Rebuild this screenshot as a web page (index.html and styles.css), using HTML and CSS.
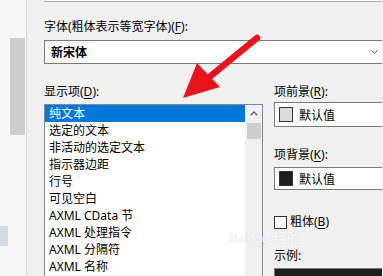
FILE: index.html
```html
<!DOCTYPE html>
<html lang="zh-CN">
<head>
    <meta charset="UTF-8">
    <title>字体和颜色</title>
    <link rel="stylesheet" href="styles.css">
</head>
<body>
    <div class="window">
        <!-- left pane, only an edge of it shows -->
        <div class="side">
            <div class="side-thumb"></div>
            <div class="side-tab"></div>
        </div>

        <div class="dialog">
            <div class="top-edge"></div>
            <div class="label font-label">字体(粗体表示等宽字体)(<u>F</u>):</div>
            <div class="combo font-combo">
                <span class="font-name">新宋体</span>
                <svg class="drop" width="7" height="4" viewBox="0 0 7 4"><path d="M0.5 0.5 L3.5 3.2 L6.5 0.5" fill="none" stroke="#555" stroke-width="1"/></svg>
            </div>

            <div class="columns">
                <!-- display items list -->
                <div class="items-col">
                    <div class="label">显示项(<u>D</u>):</div>
                    <div class="listbox">
                        <ul class="items">
                            <li class="selected">纯文本</li>
                            <li>选定的文本</li>
                            <li>非活动的选定文本</li>
                            <li>指示器边距</li>
                            <li>行号</li>
                            <li>可见空白</li>
                            <li>AXML CData 节</li>
                            <li>AXML 处理指令</li>
                            <li>AXML 分隔符</li>
                            <li>AXML 名称</li>
                        </ul>
                        <div class="vscroll">
                            <div class="scroll-up">
                                <svg width="8" height="5" viewBox="0 0 8 5"><path d="M0.7 4.3 L4 1 L7.3 4.3" fill="none" stroke="#606060" stroke-width="1.3"/></svg>
                            </div>
                            <div class="scroll-thumb"></div>
                        </div>
                    </div>
                </div>

                <!-- item colours -->
                <div class="props-col">
                    <div class="label">项前景(<u>R</u>):</div>
                    <div class="combo color-combo fore">
                        <span class="swatch light"></span>默认值
                    </div>
                    <div class="label back-label">项背景(<u>K</u>):</div>
                    <div class="combo color-combo back">
                        <span class="swatch dark"></span>默认值
                    </div>
                    <div class="check">
                        <span class="check-box"></span>粗体(<u>B</u>)
                    </div>
                    <div class="label sample-label">示例:</div>
                    <div class="sample"></div>
                </div>
            </div>
        </div>
    </div>

    <div class="watermark">Bai<span class="wm-du">du</span> 经验</div>

    <svg class="arrow" width="383" height="276" viewBox="0 0 383 276">
        <line x1="257" y1="38" x2="207" y2="79" stroke="#e8131b" stroke-width="6.5" stroke-linecap="round"/>
        <polygon points="183,98 197,63 220,87" fill="#e8131b"/>
    </svg>
</body>
</html>
```

FILE: styles.css
```css
body {
    margin: 0;
    width: 383px;
    height: 276px;
    overflow: hidden;
    position: relative;
    background: #f0f0f0;
    font-family: "Noto Sans", "Noto Sans CJK SC", sans-serif;
    font-size: 12px;
    color: #000;
}
u {
    text-decoration-thickness: 1px;
    text-underline-offset: 2px;
}
.window {
    display: flex;
    height: 276px;
    overflow: hidden;
}
.side {
    width: 27px;
    flex: none;
    background: #f7f7f7;
    border-right: 1px solid #d9d9d9;
    padding-top: 38px;
    box-sizing: border-box;
}
.side-thumb {
    margin-left: 10px;
    width: 15px;
    height: 97px;
    background: #cdcdcd;
}
.side-tab {
    margin-top: 91px;
    width: 8px;
    height: 20px;
    background: #d3d8e2;
}
.dialog {
    flex: none;
    width: 338px;
    padding-left: 17px;
    overflow: hidden;
}
.top-edge {
    height: 1px;
    border-bottom: 1px solid #adadad;
    background: #fafafa;
}
.label {
    line-height: 16px;
    height: 16px;
    white-space: nowrap;
}
.font-label {
    margin-top: 17px;
}
.combo {
    background: #fff;
    border: 1px solid #7a7a7a;
    box-sizing: border-box;
    display: flex;
    align-items: center;
    white-space: nowrap;
}
.font-combo {
    margin-top: 5px;
    width: 345px;
    height: 24px;
    padding: 0 10px 0 6px;
    justify-content: space-between;
}
.font-name {
    font-weight: bold;
}
.columns {
    display: grid;
    grid-template-columns: 219px 130px;
    column-gap: 11px;
    margin-top: 20px;
}
.listbox {
    margin-top: 4px;
    height: 180px;
    border: 1px solid #828790;
    background: #fff;
    display: flex;
}
.items {
    list-style: none;
    margin: 0;
    padding: 0;
    flex: 1;
}
.items li {
    height: 17px;
    line-height: 17px;
    padding-left: 4px;
    white-space: nowrap;
}
.items li.selected {
    background: #0078d7;
    color: #fff;
}
.vscroll {
    width: 17px;
    background: #f0f0f0;
}
.scroll-up {
    height: 17px;
    display: flex;
    align-items: center;
    justify-content: center;
}
.scroll-thumb {
    margin: 1px 1px 0 2px;
    height: 16px;
    background: #cdcdcd;
}
.color-combo {
    margin-top: 2px;
    width: 130px;
    height: 25px;
    padding-left: 4px;
}
.color-combo.back {
    margin-top: 4px;
    height: 23px;
}
.swatch {
    width: 14px;
    height: 15px;
    box-sizing: border-box;
    border: 1px solid #333;
    margin-right: 6px;
}
.swatch.light {
    background: #dcdcdc;
}
.swatch.dark {
    background: #1e1e1e;
}
.back-label {
    margin-top: 20px;
}
.check {
    margin-top: 24px;
    display: flex;
    align-items: center;
    line-height: 16px;
}
.check-box {
    width: 13px;
    height: 13px;
    box-sizing: border-box;
    border: 1px solid #333;
    background: #fff;
    margin-right: 3px;
}
.sample-label {
    margin-top: 18px;
}
.sample {
    margin-top: 4px;
    width: 130px;
    height: 8px;
    background: #1e1e1e;
    border: 1px solid #7a7a7a;
    border-bottom: none;
}
.watermark {
    position: absolute;
    left: 229px;
    top: 231px;
    height: 13px;
    font-size: 14px;
    line-height: 13px;
    font-weight: bold;
    color: rgba(255, 255, 255, 0.8);
    text-shadow: 0 0 1px rgba(0, 0, 0, 0.15);
    white-space: nowrap;
    pointer-events: none;
}
.wm-du {
    font-size: 12px;
    margin-left: 3px;
}
.arrow {
    position: absolute;
    left: 0;
    top: 0;
    pointer-events: none;
}
```
